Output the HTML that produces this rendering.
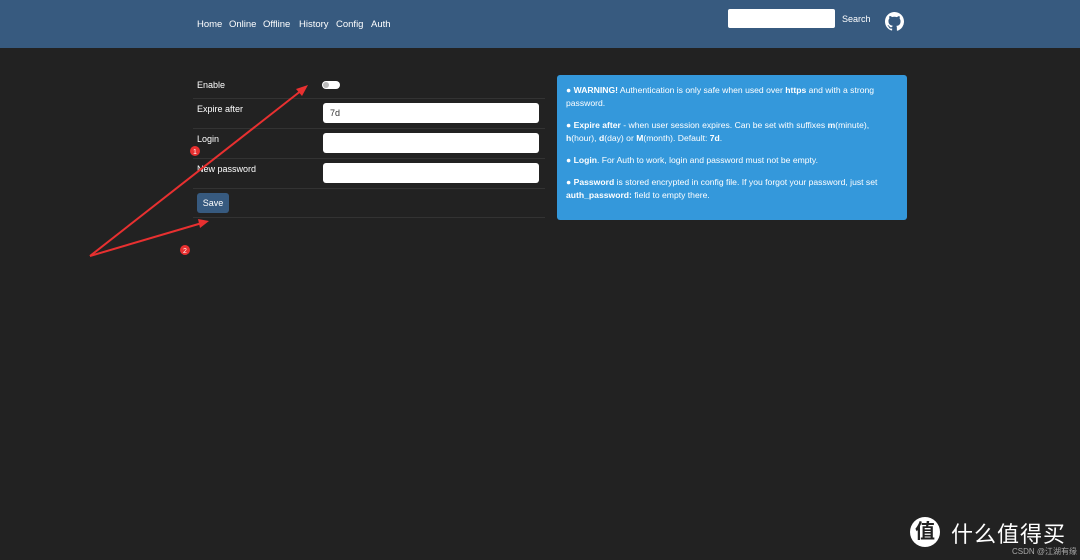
<!DOCTYPE html>
<html><head><meta charset="utf-8"><style>
*{margin:0;padding:0;box-sizing:border-box}
body{width:1080px;height:560px;background:#222;font-family:"Liberation Sans","Noto Sans CJK SC",sans-serif;color:#fff;position:relative;overflow:hidden}
.nav{position:absolute;left:0;top:0;width:1080px;height:48px;background:#375a7f}
.nav a{position:absolute;top:19px;font-size:9.5px;color:#fff}
.t{position:absolute;font-size:9px;color:#fff}
.line{position:absolute;left:193px;width:352px;height:1px;background:#333}
.inp{position:absolute;left:323px;width:216px;height:20px;background:#fff;border-radius:3px}
.box{position:absolute;left:557px;top:75px;width:350px;height:145px;background:#3498db;border-radius:3px;padding:9px 9px;font-size:8.6px;line-height:13px}
.box p{margin-bottom:9px}
</style></head><body>
<div class="nav">
<a style="left:197px">Home</a><a style="left:229px">Online</a><a style="left:263px">Offline</a><a style="left:299px">History</a><a style="left:336px">Config</a><a style="left:371px">Auth</a>
<div style="position:absolute;left:728px;top:9px;width:107px;height:19px;background:#fff;border-radius:2px"></div>
<a style="left:842px;top:14px;font-size:9px">Search</a>
<svg style="position:absolute;left:885px;top:12px" width="19" height="19" viewBox="0 0 16 16"><path fill="#fff" d="M8 0C3.580 0 0 3.58 0 8c0 3.54 2.29 6.53 5.47 7.590.4.07.55-.17.55-.38v-1.33c-2.23.48-2.7-1.07-2.7-1.070-.36-.92-.89-1.17-.89-1.17-.73-.5.06-.49.06-.49.8.06 1.23.83 1.23.83.71 1.22 1.87.87 2.330.66.07-.52.28-.87.5-1.07-1.78-.2-3.65-.89-3.65-3.95 0-.87.31-1.59.82-2.15-.08-.2-.36-1.02.08-2.12 0 0 .67-.21 2.2.82A7.600 7.600 0 0 1 8 4.04c.68 0 1.36.09 2 .27 1.53-1.04 2.2-.82 2.2-.82.44 1.1.16 1.92.08 2.12.51.56.82 1.27.82 2.15 0 3.07-1.87 3.75-3.65 3.95.29.25.54.73.54 1.48v2.2c0 .21.15.46.55.38A8 8 0 0 0 16 8c0-4.42-3.58-8-8-8z"/></svg>
</div>
<div class="t" style="left:197px;top:80px">Enable</div>
<div style="position:absolute;left:322px;top:81px;width:18px;height:8px;border-radius:4px;background:#fff"><div style="position:absolute;left:1px;top:1px;width:6px;height:6px;border-radius:3px;background:#bbb"></div></div>
<div class="line" style="top:98px"></div>
<div class="t" style="left:197px;top:104px">Expire after</div>
<div class="inp" style="top:103px"><span style="position:absolute;left:7px;top:5px;font-size:9px;color:#333">7d</span></div>
<div class="line" style="top:128px"></div>
<div class="t" style="left:197px;top:134px">Login</div>
<div class="inp" style="top:133px"></div>
<div class="line" style="top:158px"></div>
<div class="t" style="left:197px;top:164px">New password</div>
<div class="inp" style="top:163px"></div>
<div class="line" style="top:188px"></div>
<div style="position:absolute;left:197px;top:193px;width:32px;height:20px;background:#375a7f;border-radius:3px;font-size:9px;text-align:center;line-height:20px">Save</div>
<div class="line" style="top:217px"></div>
<div class="box">
<p>● <b>WARNING!</b> Authentication is only safe when used over <b>https</b> and with a strong password.</p>
<p>● <b>Expire after</b> - when user session expires. Can be set with suffixes <b>m</b>(minute), <b>h</b>(hour), <b>d</b>(day) or <b>M</b>(month). Default: <b>7d</b>.</p>
<p>● <b>Login</b>. For Auth to work, login and password must not be empty.</p>
<p>● <b>Password</b> is stored encrypted in config file. If you forgot your password, just set <b>auth_password:</b> field to empty there.</p>
</div>
<svg style="position:absolute;left:0;top:0" width="1080" height="560">
<line x1="90" y1="256" x2="302" y2="90" stroke="#e83030" stroke-width="2"/>
<polygon points="308,85 296,89 302,96" fill="#e83030"/>
<line x1="90" y1="256" x2="202" y2="223" stroke="#e83030" stroke-width="2"/>
<polygon points="209,221 198,219 200,228" fill="#e83030"/>
<circle cx="195" cy="151" r="5" fill="#e83030"/><text x="195" y="154" font-size="7" fill="#fff" text-anchor="middle" font-family="Liberation Sans">1</text>
<circle cx="185" cy="250" r="5" fill="#e83030"/><text x="185" y="253" font-size="7" fill="#fff" text-anchor="middle" font-family="Liberation Sans">2</text>
<circle cx="925" cy="532" r="15" fill="#fff"/>
</svg>
<div style="position:absolute;left:913px;top:518px;width:24px;font-size:20px;color:#222;font-weight:bold;text-align:center;line-height:28px">值</div>
<div style="position:absolute;left:951px;top:517px;font-size:22px;letter-spacing:1px;color:#fff">什么值得买</div>
<div style="position:absolute;left:1012px;top:546px;font-size:8px;color:#aaa">CSDN @江湖有缘</div>
</body></html>
